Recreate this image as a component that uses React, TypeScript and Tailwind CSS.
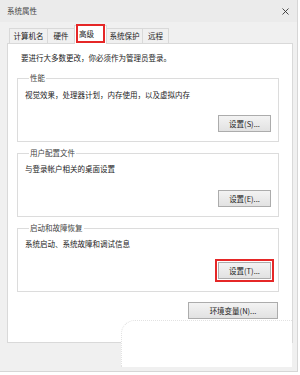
const font = { fontFamily: '"Noto Sans CJK SC", "Noto Sans", sans-serif' };

function Btn({ label, w = 'w-[53px]', hl = false }: { label: string; w?: string; hl?: boolean }) {
  return (
    <div
      className={`${w} h-[17px] flex items-center justify-center border border-[#acacac] bg-gradient-to-b from-[#f3f3f3] to-[#e2e2e2] text-[7.5px] leading-[10px] text-[#222] ${
        hl ? 'outline-[2.5px] outline-solid outline-offset-[1px] outline-[#e52727]' : ''
      }`}
    >
      {label}
    </div>
  );
}

function Group({
  title,
  desc,
  btn,
  descMt,
  btnMt,
  pb,
  hl,
  className = '',
}: {
  title: string;
  desc: string;
  btn: string;
  descMt: string;
  btnMt: string;
  pb: string;
  hl?: boolean;
  className?: string;
}) {
  return (
    <fieldset className={`w-[262px] ml-[9px] border border-[#dcdcdc] px-[7px] ${pb} ${className}`}>
      <legend className="ml-[4px] px-[1px] text-[7.5px] leading-[10px] text-[#444]">{title}</legend>
      <div className={`${descMt} text-[7.5px] leading-[10px] text-[#222]`}>{desc}</div>
      <div className={`${btnMt} flex justify-end`}>
        <Btn label={btn} hl={hl} />
      </div>
    </fieldset>
  );
}

const tabs = [
  { name: '计算机名', w: 'w-[39px]' },
  { name: '硬件', w: 'w-[28px]' },
  { name: '高级', w: 'w-[33px]', active: true },
  { name: '系统保护', w: 'w-[37px]' },
  { name: '远程', w: 'w-[27px]' },
];

export default function App() {
  return (
    <div className="w-[300px] h-[375px] bg-white overflow-hidden" style={font}>
      <div className="relative w-[298px] h-[372px] bg-[#f0f0f0] border-r border-b border-[#d6d6d6] flex flex-col">
        {/* title bar */}
        <div className="h-[22px] bg-[#ebebeb] flex items-center justify-between pl-[7px] pr-[8px]">
          <span className="text-[7.5px] leading-[10px] text-[#444]">系统属性</span>
          <svg width="7" height="7" viewBox="0 0 7 7" className="text-[#333]">
            <path d="M0.5 0.5 L6.5 6.5 M6.5 0.5 L0.5 6.5" stroke="currentColor" strokeWidth="0.9" />
          </svg>
        </div>

        {/* tabs */}
        <div className="mt-[3px] ml-[9px] flex items-end h-[18px] relative z-10">
          {tabs.map((t) =>
            t.active ? (
              <div
                key={t.name}
                className={`${t.w} h-[19px] -mb-px -ml-px relative bg-white border border-b-0 border-[#d9d9d9] pl-[4px] pt-[3px] text-[7.5px] leading-[10px] text-[#222]`}
              >
                {t.name}
                <span className="absolute -top-[2px] left-[1px] right-[1px] bottom-[1px] border-[2.5px] border-[#e52727]" />
              </div>
            ) : (
              <div
                key={t.name}
                className={`${t.w} h-[15px] -ml-px first:ml-0 bg-[#f0f0f0] border border-b-0 border-[#d9d9d9] flex items-center justify-center text-[7.5px] leading-[10px] text-[#222]`}
              >
                {t.name}
              </div>
            ),
          )}
        </div>

        {/* panel */}
        <div className="ml-[7px] w-[286px] h-[300px] bg-white border border-[#d9d9d9] flex flex-col">
          <div className="mt-[9px] ml-[13px] text-[7.5px] leading-[10px] text-[#222]">
            要进行大多数更改，你必须作为管理员登录。
          </div>
          <Group
            className="mt-[10px]"
            title="性能"
            desc="视觉效果，处理器计划，内存使用，以及虚拟内存"
            btn="设置(S)..."
            descMt="mt-[7px]"
            btnMt="mt-[15px]"
            pb="pb-[9px]"
          />
          <Group
            className="mt-[6px]"
            title="用户配置文件"
            desc="与登录帐户相关的桌面设置"
            btn="设置(E)..."
            descMt="mt-[6px]"
            btnMt="mt-[16px]"
            pb="pb-[9px]"
          />
          <Group
            className="mt-[6px]"
            title="启动和故障恢复"
            desc="系统启动、系统故障和调试信息"
            btn="设置(T)..."
            descMt="mt-[6px]"
            btnMt="mt-[13px]"
            pb="pb-[12px]"
            hl
          />
          <div className="mt-[10px] flex justify-end mr-[14px]">
            <Btn label="环境变量(N)..." w="w-[90px]" />
          </div>
        </div>

        {/* white overlay artifact */}
        <div className="absolute left-[121px] top-[320px] w-[171px] h-[47px] bg-white border-l border-t border-dotted border-[#e2e2e2] rounded-tl-[14px]" />
      </div>
    </div>
  );
}
